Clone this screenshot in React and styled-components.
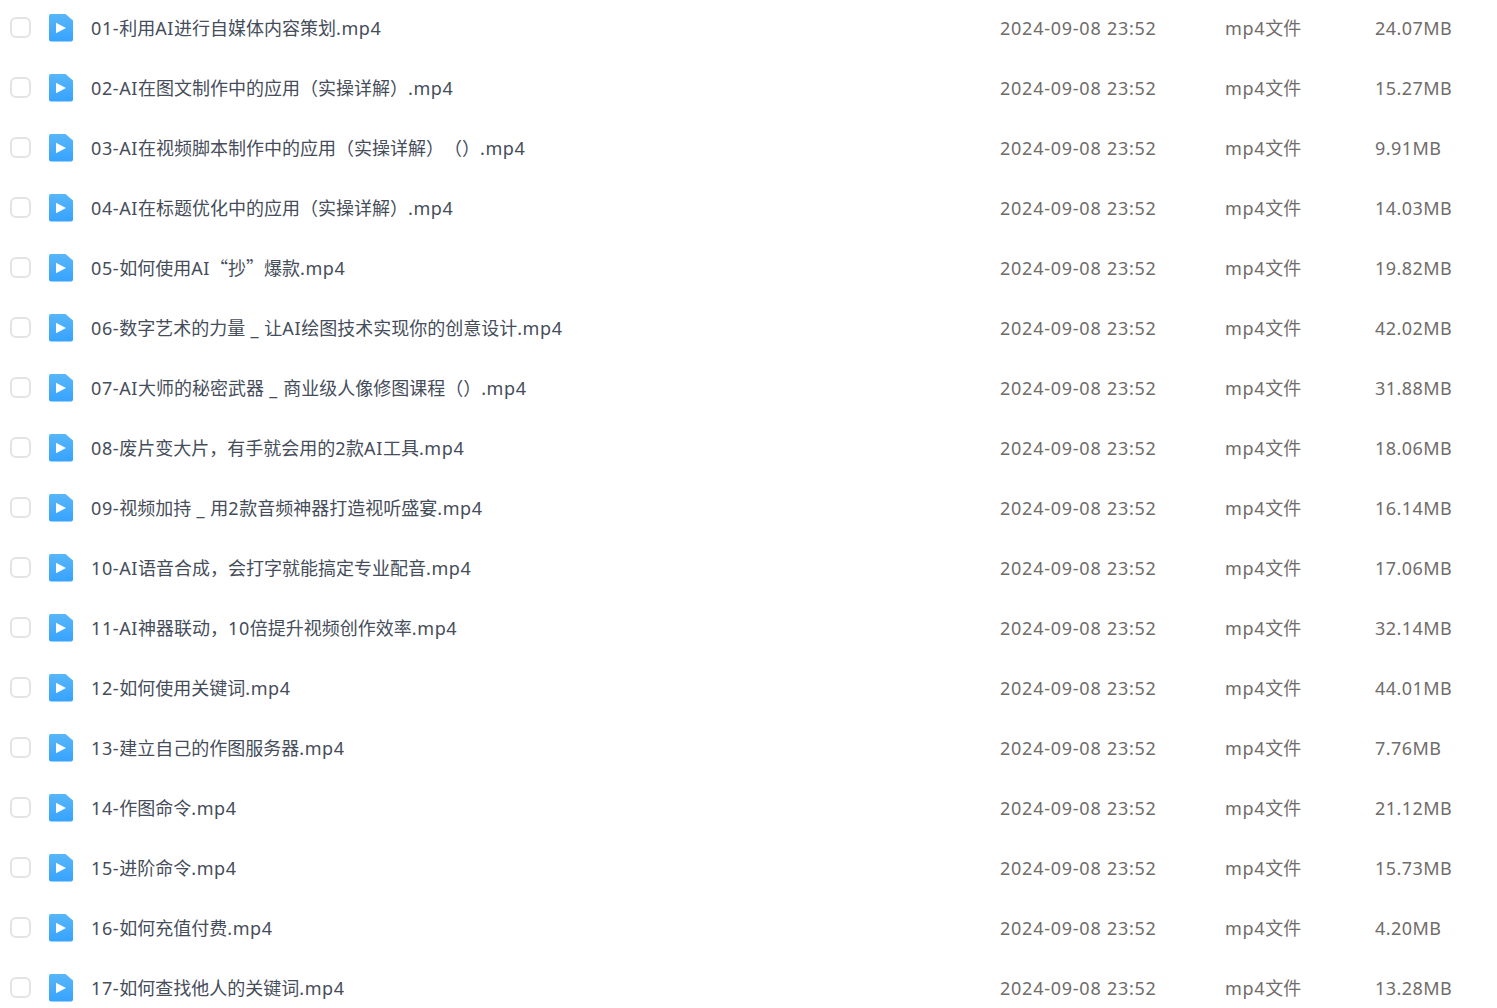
import React from "react";
import styled, { createGlobalStyle } from "styled-components";

const Global = createGlobalStyle`
  html, body { margin: 0; padding: 0; background: #fff; height: 1008px; overflow: hidden; }
`;

const List = styled.div`
  margin-top: -2px;
  width: 1497px;
  height: 1010px;
  overflow: hidden;
  font-family: "Noto Sans CJK SC", "Noto Sans", sans-serif;
  text-spacing-trim: space-all;
`;

const Row = styled.div`
  display: flex;
  align-items: center;
  height: 60px;
`;

const Check = styled.span`
  box-sizing: border-box;
  width: 21px;
  height: 21px;
  margin-left: 10px;
  margin-bottom: 1px;
  border: 2px solid #e4e4e4;
  border-radius: 6px;
  flex: none;
`;

const FileIcon = styled.svg`
  width: 25px;
  height: 28px;
  margin-left: 18px;
  flex: none;
`;

const Name = styled.span`
  margin-left: 17px;
  width: 909px;
  flex: none;
  font-size: 18px;
  line-height: 24px;
  margin-bottom: 1px;
  color: #454d5a;
  white-space: nowrap;
`;

const Meta = styled.span`
  flex: none;
  width: ${p => p.$w}px;
  font-size: 18px;
  line-height: 24px;
  margin-bottom: 1px;
  color: #6f6c6a;
  white-space: nowrap;
`;

const Latin = styled.span`
  font-family: "Noto Sans", sans-serif;
  letter-spacing: ${p => p.$ls ?? 0.6}px;
`;

const rows = [
  ["01-利用AI进行自媒体内容策划.mp4", "24.07MB"],
  ["02-AI在图文制作中的应用（实操详解）.mp4", "15.27MB"],
  ["03-AI在视频脚本制作中的应用（实操详解）（）.mp4", "9.91MB"],
  ["04-AI在标题优化中的应用（实操详解）.mp4", "14.03MB"],
  ["05-如何使用AI“抄”爆款.mp4", "19.82MB"],
  ["06-数字艺术的力量 _ 让AI绘图技术实现你的创意设计.mp4", "42.02MB"],
  ["07-AI大师的秘密武器 _ 商业级人像修图课程（）.mp4", "31.88MB"],
  ["08-废片变大片，有手就会用的2款AI工具.mp4", "18.06MB"],
  ["09-视频加持 _ 用2款音频神器打造视听盛宴.mp4", "16.14MB"],
  ["10-AI语音合成，会打字就能搞定专业配音.mp4", "17.06MB"],
  ["11-AI神器联动，10倍提升视频创作效率.mp4", "32.14MB"],
  ["12-如何使用关键词.mp4", "44.01MB"],
  ["13-建立自己的作图服务器.mp4", "7.76MB"],
  ["14-作图命令.mp4", "21.12MB"],
  ["15-进阶命令.mp4", "15.73MB"],
  ["16-如何充值付费.mp4", "4.20MB"],
  ["17-如何查找他人的关键词.mp4", "13.28MB"],
];

const Mixed = ({ text, ls }) =>
  text.split(/([\x00-\x7f]+)/).filter(Boolean).map((part, i) =>
    /^[\x00-\x7f]/.test(part) ? <Latin key={i} $ls={ls}>{part}</Latin> : part
  );

const Icon = () => (
  <FileIcon viewBox="0 0 25 28">
    <defs>
      <linearGradient id="fileBlue" x1="0" y1="0" x2="0" y2="1">
        <stop offset="0" stopColor="#58b6f8" />
        <stop offset="1" stopColor="#37a3ff" />
      </linearGradient>
    </defs>
    <path d="M2 0h14.5l7.5 6.5V25.5a2 2 0 0 1-2 2H2a2 2 0 0 1-2-2V2a2 2 0 0 1 2-2z" fill="url(#fileBlue)" />
    <path d="M7 8.7v10.6l10-5.3z" fill="#fff" />
  </FileIcon>
);

export default function App() {
  return (
    <>
      <Global />
      <List lang="zh-CN">
        {rows.map(([name, size]) => (
          <Row key={name}>
            <Check />
            <Icon />
            <Name><Mixed text={name} /></Name>
            <Meta $w={225}><Mixed text="2024-09-08 23:52" ls={0.75} /></Meta>
            <Meta $w={150}><Mixed text="mp4文件" ls={0.65} /></Meta>
            <Meta $w={100}><Mixed text={size} ls={0.45} /></Meta>
          </Row>
        ))}
      </List>
    </>
  );
}
